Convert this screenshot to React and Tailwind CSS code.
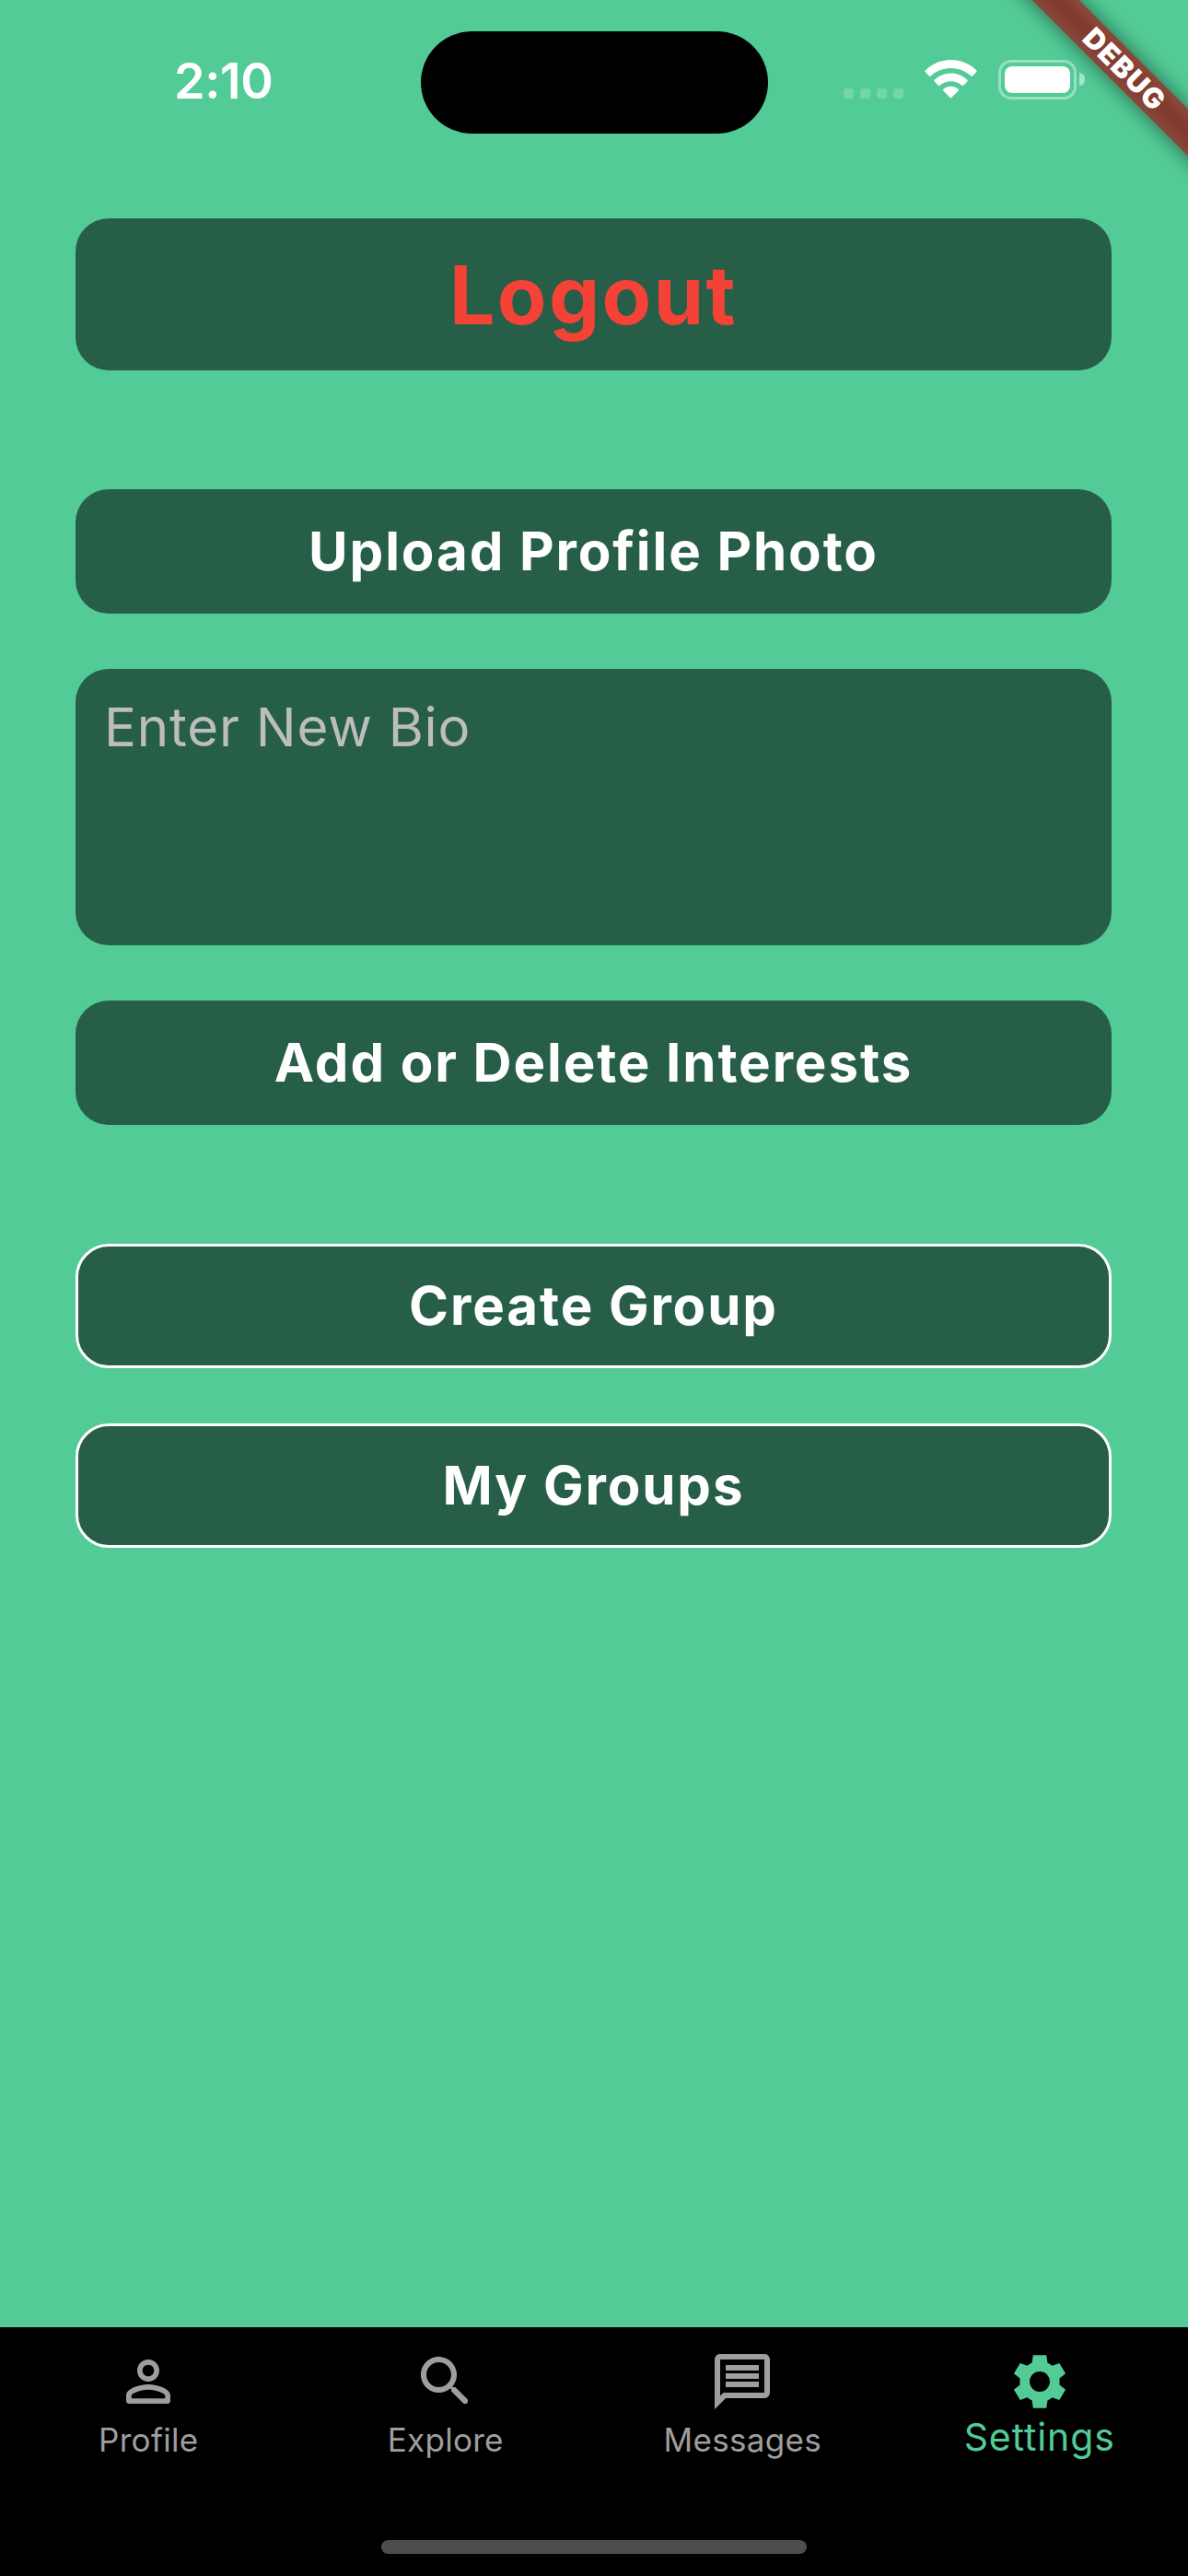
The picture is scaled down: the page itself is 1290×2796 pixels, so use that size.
import React from "react";

function WifiIcon() {
  return (
    <svg className="h-[42px] w-[57px]" viewBox="0 0 58 42" preserveAspectRatio="none" fill="#fff">
      <path d="M29 0C40 0 50 4.300 57.300 11.400c.5.500.5 1.200 0 1.700L53 17.400c-.5.500-1.200.500-1.700 0C45.300 12 37.500 8.900 29 8.900S12.700 12 6.700 17.400c-.5.500-1.200.500-1.700 0L.7 13.100c-.5-.5-.5-1.200 0-1.700C8 4.300 18 0 29 0z" />
      <path d="M29 14.600c7 0 13.300 2.700 18.200 7.100.5.500.5 1.200 0 1.700l-4.300 4.300c-.5.500-1.200.500-1.700.1C37.800 25 33.600 23.300 29 23.300S20.200 25 16.800 27.800c-.5.400-1.200.4-1.700-.1l-4.300-4.300c-.5-.5-.5-1.200 0-1.700C15.700 17.300 22 14.600 29 14.600z" />
      <path d="M29 28.800c3.100 0 6 1.100 8.300 2.900.5.400.5 1.100.1 1.600l-7.600 7.800c-.5.500-1.200.500-1.700 0l-7.500-7.800c-.5-.5-.4-1.200.1-1.600 2.300-1.800 5.200-2.900 8.300-2.900z" />
    </svg>
  );
}

function StatusBar() {
  return (
    <div className="flex h-[237px] items-start">
      <div className="w-[457px] pt-[56px] pl-[189px] text-[54px] leading-[64px] font-semibold tracking-[-0.5px] text-white">2:10</div>
      <div className="mt-[33.5px] h-[111px] w-[377px] rounded-full bg-black" />
      <div className="ml-[82px] flex h-[172px] items-center">
        <div className="mt-[31px] flex gap-[7px]">
          <span className="size-[11px] rounded-[3px] bg-white/20" />
          <span className="size-[11px] rounded-[3px] bg-white/20" />
          <span className="size-[11px] rounded-[3px] bg-white/20" />
          <span className="size-[11px] rounded-[3px] bg-white/20" />
        </div>
        <div className="ml-[23px]"><WifiIcon /></div>
        <div className="ml-[23px] h-[43px] w-[85px] rounded-[14px] border-[3px] border-white/40 p-[4px]">
          <div className="h-[29px] w-[71px] rounded-[8px] bg-white" />
        </div>
        <div className="ml-[3px] h-[14px] w-[6px] rounded-r-full bg-white/50" />
      </div>
    </div>
  );
}

function DebugBanner() {
  return (
    <div className="pointer-events-none absolute top-0 right-0 size-[220px] overflow-hidden">
      <div className="absolute top-[53.5px] left-[-2px] h-[36px] w-[300px] rotate-45">
        <div className="absolute inset-y-0 -inset-x-10 bg-black/50 blur-[11px]" />
        <div className="relative flex size-full items-center justify-center bg-[#b71c1ca0] pl-[9px] text-[30.6px] leading-[36px] font-black tracking-[1.2px] text-white">DEBUG</div>
      </div>
    </div>
  );
}

function ActionButton({ children, outlined }) {
  return (
    <button className={`flex h-[135px] w-full items-center justify-center rounded-[36px] bg-[#275e47] pb-[2px] text-[58.2px] leading-[70px] font-bold tracking-[1.9px] text-white ${outlined ? "border-[3px] border-white" : ""}`}>
      {children}
    </button>
  );
}

const tabs = [
  { label: "Profile", path: "M12 5.900c1.160 0 2.100.94 2.100 2.100s-.94 2.100-2.100 2.100S9.900 9.160 9.900 8s.94-2.100 2.100-2.100m0 9c2.970 0 6.100 1.460 6.100 2.100v1.100H5.900V17c0-.64 3.130-2.100 6.100-2.100M12 4C9.790 4 8 5.790 8 8s1.790 4 4 4 4-1.790 4-4-1.790-4-4-4zm0 9c-2.670 0-8 1.340-8 4v2c0 .55.45 1 1 1h14c.55 0 1-.45 1-1v-2c0-2.660-5.330-4-8-4z" },
  { label: "Explore", path: "M15.500 14h-.79l-.28-.27c1.200-1.400 1.820-3.310 1.480-5.340-.47-2.780-2.790-5-5.590-5.340-4.230-.52-7.790 3.040-7.270 7.270.34 2.800 2.560 5.120 5.340 5.590 2.030.34 3.940-.28 5.340-1.480l.27.28v.79l4.250 4.250c.41.41 1.080.41 1.490 0 .41-.41.41-1.080 0-1.490L15.500 14zm-6 0C7.010 14 5 11.990 5 9.500S7.010 5 9.500 5 14 7.010 14 9.500 11.990 14 9.500 14z" },
  { label: "Messages", path: "M4 4h16v12H5.170L4 17.170V4m0-2c-1.100 0-1.990.9-1.990 2L2 22l4-4h14c1.100 0 2-.9 2-2V4c0-1.100-.9-2-2-2H4zm2 10h12v2H6v-2zm0-3h12v2H6V9zm0-3h12v2H6V6z" },
  { label: "Settings", active: true, path: "M9.600 2.450H14.400L14.800 5.200C15.400 5.500 16 5.850 16.500 6.250L19.100 5.300L21.350 9.100L19.150 10.800C19.200 11.600 19.200 12.400 19.150 13.200L21.350 14.900L19.100 18.700L16.500 17.750C16 18.150 15.400 18.500 14.800 18.800L14.400 21.550H9.600L9.200 18.800C8.600 18.500 8 18.150 7.500 17.750L4.900 18.700L2.650 14.900L4.850 13.200C4.800 12.400 4.800 11.600 4.850 10.800L2.650 9.100L4.900 5.300L7.500 6.250C8 5.850 8.600 5.500 9.200 5.200zM12 8.350a3.650 3.650 0 1 0 0 7.300a3.650 3.650 0 1 0 0-7.300z" },
];

function TabBar() {
  return (
    <nav className="flex h-[270px] flex-col bg-black">
      <div className="grid h-[231px] grid-cols-4 pt-[23px]">
        {tabs.map((tab) => (
          <div key={tab.label} className={`flex flex-col items-center ${tab.active ? "text-[#52cb96]" : "text-[#9e9e9e]"}`}>
            <svg className="size-[72px]" viewBox="0 0 24 24" fill="currentColor" fillRule="evenodd"><path d={tab.path} /></svg>
            <span className={tab.active ? "mt-[-1px] text-[41px] leading-[50px] tracking-[0.9px]" : "mt-[2px] text-[35px] leading-[50px] tracking-[0.3px]"}>{tab.label}</span>
          </div>
        ))}
      </div>
      <div className="mx-auto h-[15px] w-[462px] rounded-full bg-[#4d4d4d]" />
    </nav>
  );
}

export default function App() {
  return (
    <div className="relative flex h-[2796px] w-[1290px] flex-col overflow-hidden bg-[#52cb96] font-['Inter',sans-serif]">
      <StatusBar />
      <main className="flex flex-1 flex-col pr-[83px] pl-[82px]">
        <button className="flex h-[165px] w-full items-center justify-center rounded-[36px] bg-[#275e47] pt-[2px] text-[87.5px] leading-[105px] font-bold tracking-[2.4px] text-[#f44336]">Logout</button>
        <div className="mt-[129px]"><ActionButton>Upload Profile Photo</ActionButton></div>
        <textarea placeholder="Enter New Bio" className="mt-[60px] block h-[300px] w-full resize-none rounded-[36px] bg-[#275e47] px-[31px] pt-[28px] text-[58.2px] leading-[70px] tracking-[0.8px] text-white outline-none placeholder:text-[#bdbdbd]" />
        <div className="mt-[60px]"><ActionButton>Add or Delete Interests</ActionButton></div>
        <div className="mt-[129px] flex flex-col gap-[60px]">
          <ActionButton outlined>Create Group</ActionButton>
          <ActionButton outlined>My Groups</ActionButton>
        </div>
      </main>
      <TabBar />
      <DebugBanner />
    </div>
  );
}
